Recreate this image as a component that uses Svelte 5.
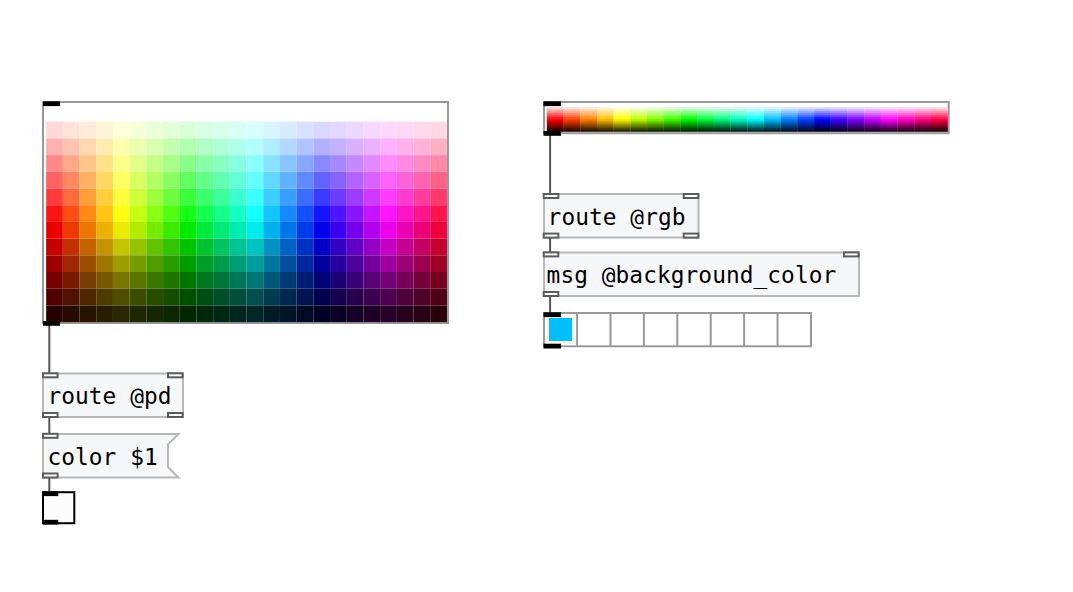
<script>
  const hues = Array.from({ length: 24 }, (_, i) => i * 15);
  const levels = Array.from({ length: 12 }, (_, i) => i + 1);

  // lap: how far each swatch runs under the row below it
  const palettes = [
    { x: 43, y: 102, w: 405, h: 221, gx: 46.15, gy: 105, cw: 16.7, ch: 16.7, lap: 0 },
    { x: 544, y: 102, w: 404.7, h: 31.2, gx: 546.9, gy: 105, cw: 16.7, ch: 2.06, lap: 1.5 }
  ];

  const cords = [
    [49.3, 324, 374], [49.3, 416, 434], [49.3, 477, 492],
    [550.1, 134, 194], [550.1, 237, 253], [550.1, 295, 314]
  ];

  const boxes = [
    { d: 'M43 373.5H183V417H43Z', text: 'route @pd', tx: 47.4, ty: 404 },
    { d: 'M43 434H178.5L168 444.5V467L178.5 477.5H43Z', text: 'color $1', tx: 47.4, ty: 465 },
    { d: 'M544 194H698.5V237.5H544Z', text: 'route @rgb', tx: 547.6, ty: 225 },
    { d: 'M544 252.5H859V296H544Z', text: 'msg @background_color', tx: 546.6, ty: 283 }
  ];

  const ports = [
    [43, 373.3], [168, 373.3], [43, 413], [168, 413],
    [43, 433.8], [43, 473.5],
    [543.7, 194], [683.7, 194], [543.7, 233.6], [683.7, 233.6],
    [543.7, 252.4], [844, 252.4], [543.7, 292]
  ];

  const uiPorts = [
    [43, 101.3, 17], [43, 321, 17], [543.5, 101.3, 17.5], [543.5, 131, 17.5],
    [543.5, 312.3, 17.5], [543.5, 343.7, 17.5], [43, 491.3, 15.3], [43, 519.8, 15.3]
  ];
</script>

<svg class="patch" width="1073" height="592" viewBox="0 0 1073 592">
  {#each palettes as p}
    <rect class="frame" x={p.x} y={p.y} width={p.w} height={p.h} />
    {#each hues as hue, c}
      {#each levels as level}
        <rect
          x={p.gx + c * p.cw}
          y={p.gy + level * p.ch}
          width={p.cw}
          height={p.ch + (level < 12 ? p.lap : 0)}
          fill={`hsl(${hue}, 100%, ${100 - (level * 100) / 13}%)`}
        />
      {/each}
    {/each}
  {/each}

  {#each boxes as b}
    <path class="box" d={b.d} />
    <text x={b.tx} y={b.ty}>{b.text}</text>
  {/each}

  <rect class="frame" x="544" y="313" width="267" height="33.3" />
  {#each [1, 2, 3, 4, 5, 6, 7] as n}
    <path class="frame" d={`M${543.7 + n * 33.4} 313V346`} />
  {/each}
  <rect class="selected" x="549" y="318" width="23" height="23" />

  <rect class="canvas" x="43" y="492.2" width="31.3" height="31" />

  {#each cords as [x, y1, y2]}
    <path class="cord" d={`M${x} ${y1}V${y2}`} />
  {/each}
  {#each ports as [x, y]}
    <rect class="port" {x} {y} width="14.6" height="4" />
  {/each}
  {#each uiPorts as [x, y, w]}
    <rect {x} {y} width={w} height="4.8" />
  {/each}
</svg>

<style>
  :global(body) {
    margin: 0;
    background: #fff;
  }
  .patch {
    display: block;
  }
  .frame {
    fill: #fff;
    stroke: #999;
    stroke-width: 2;
  }
  .box {
    fill: #f6f7f9;
    stroke: #b8b8b8;
    stroke-width: 2;
  }
  .cord {
    fill: none;
    stroke: #555;
    stroke-width: 2;
  }
  .port {
    fill: #fff;
    stroke: #5c5c5c;
    stroke-width: 2;
  }
  .canvas {
    fill: #fcfcfc;
    stroke: #000;
    stroke-width: 2;
  }
  .selected {
    fill: #00bfff;
  }
  text {
    font-family: "DejaVu Sans Mono", monospace;
    font-size: 22.8px;
    letter-spacing: 0.07px;
    fill: #000;
    white-space: pre;
  }
</style>
